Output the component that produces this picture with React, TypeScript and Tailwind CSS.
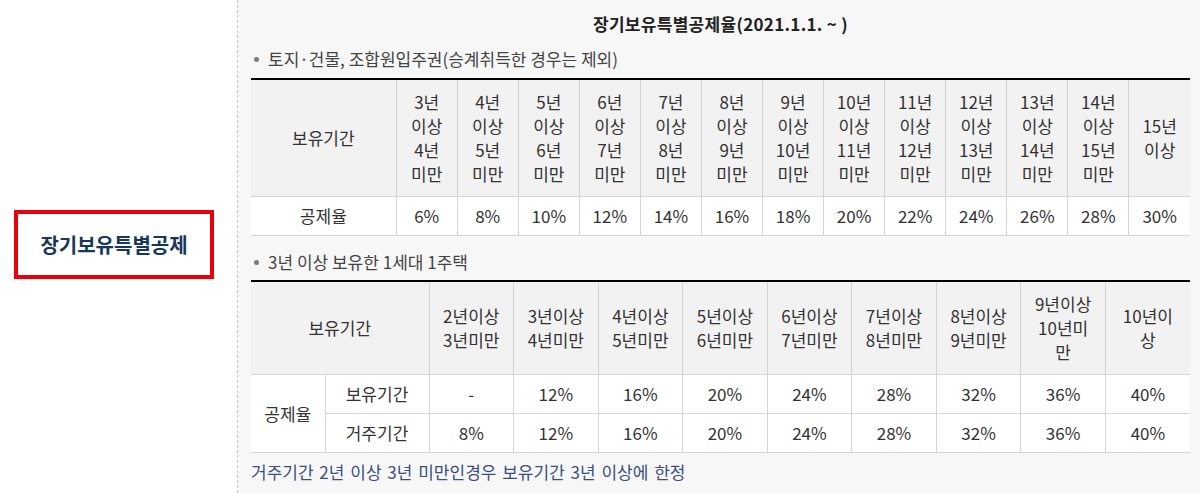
const font = { fontFamily: '"Noto Sans CJK KR", "Noto Sans", sans-serif' }

const periods1 = [
  ['3년', '이상', '4년', '미만'],
  ['4년', '이상', '5년', '미만'],
  ['5년', '이상', '6년', '미만'],
  ['6년', '이상', '7년', '미만'],
  ['7년', '이상', '8년', '미만'],
  ['8년', '이상', '9년', '미만'],
  ['9년', '이상', '10년', '미만'],
  ['10년', '이상', '11년', '미만'],
  ['11년', '이상', '12년', '미만'],
  ['12년', '이상', '13년', '미만'],
  ['13년', '이상', '14년', '미만'],
  ['14년', '이상', '15년', '미만'],
  ['15년', '이상']
]
const rates1 = ['6%', '8%', '10%', '12%', '14%', '16%', '18%', '20%', '22%', '24%', '26%', '28%', '30%']

const periods2 = [
  ['2년이상', '3년미만'],
  ['3년이상', '4년미만'],
  ['4년이상', '5년미만'],
  ['5년이상', '6년미만'],
  ['6년이상', '7년미만'],
  ['7년이상', '8년미만'],
  ['8년이상', '9년미만'],
  ['9년이상', '10년미', '만'],
  ['10년이', '상']
]
const holding = ['-', '12%', '16%', '20%', '24%', '28%', '32%', '36%', '40%']
const living = ['8%', '12%', '16%', '20%', '24%', '28%', '32%', '36%', '40%']

const th =
  'bg-[#f2f2f2] border-t-2 border-t-black border-b border-b-[#d4d4d4] border-l border-l-[#d4d4d4] first:border-l-0 font-normal text-center align-middle py-[10px] leading-[24px]'
const td =
  'bg-white border-b border-[#d4d4d4] border-l text-center align-middle py-[7px] leading-[24px]'

function Lines({ lines }: { lines: string[] }) {
  return (
    <>
      {lines.map((l, i) => (
        <div key={i}>{l}</div>
      ))}
    </>
  )
}

function Bullet({ children }: { children: React.ReactNode }) {
  return (
    <div className="flex items-center leading-[24px] text-[17px] text-[#444]">
      <span className="w-[5px] h-[5px] rounded-full bg-[#7a7a7a] ml-[3px] mr-[9px]"></span>
      {children}
    </div>
  )
}

export default function App() {
  return (
    <div className="flex w-[1200px] h-[493px] overflow-hidden bg-white" style={font}>
      {/* left label */}
      <div className="w-[238px] shrink-0 border-r border-dashed border-[#c8c8c8] pl-[14px] pt-[210px]">
        <div className="w-[200px] h-[69px] border-4 border-[#e8000b] flex items-center justify-center">
          <span className="text-[20px] font-bold text-[#17375e]">장기보유특별공제</span>
        </div>
      </div>

      {/* right content */}
      <div className="flex-1 bg-[#f7f7f7] pl-[13px] pr-[10px] pt-[12px] text-[#333]">
        <h2 className="text-center font-bold text-[17px] leading-[24px] text-[#222] tracking-[0.3px]">
          장기보유특별공제율(2021.1.1. ~ )
        </h2>

        <div className="mt-[11px]">
          <Bullet>토지·건물, 조합원입주권(승계취득한 경우는 제외)</Bullet>
        </div>

        <table className="mt-[7px] w-[939px] table-fixed border-collapse text-[17px] text-[#333]">
          <colgroup>
            <col className="w-[145px]" />
            {periods1.map((_, i) => (
              <col key={i} className="w-[61px]" />
            ))}
          </colgroup>
          <thead>
            <tr>
              <th className={th}>보유기간</th>
              {periods1.map((p, i) => (
                <th key={i} className={th}>
                  <Lines lines={p} />
                </th>
              ))}
            </tr>
          </thead>
          <tbody>
            <tr>
              <td className={td + ' border-l-0'}>공제율</td>
              {rates1.map((r) => (
                <td key={r} className={td}>
                  {r}
                </td>
              ))}
            </tr>
          </tbody>
        </table>

        <div className="mt-[14px]">
          <Bullet>3년 이상 보유한 1세대 1주택</Bullet>
        </div>

        <table className="mt-[6px] w-[939px] table-fixed border-collapse text-[17px] text-[#333]">
          <colgroup>
            <col className="w-[74px]" />
            <col className="w-[104px]" />
            {periods2.map((_, i) => (
              <col key={i} />
            ))}
          </colgroup>
          <thead>
            <tr>
              <th colSpan={2} className={th}>
                보유기간
              </th>
              {periods2.map((p, i) => (
                <th key={i} className={th}>
                  <Lines lines={p} />
                </th>
              ))}
            </tr>
          </thead>
          <tbody>
            <tr>
              <td rowSpan={2} className={td + ' border-l-0'}>
                공제율
              </td>
              <td className={td}>보유기간</td>
              {holding.map((r, i) => (
                <td key={i} className={td}>
                  {r}
                </td>
              ))}
            </tr>
            <tr>
              <td className={td}>거주기간</td>
              {living.map((r, i) => (
                <td key={i} className={td}>
                  {r}
                </td>
              ))}
            </tr>
          </tbody>
        </table>

        <p className="mt-[7px] text-[17px] leading-[24px] text-[#3b4f7e] [word-spacing:2px]">
          거주기간 2년 이상 3년 미만인경우 보유기간 3년 이상에 한정
        </p>
      </div>
    </div>
  )
}
